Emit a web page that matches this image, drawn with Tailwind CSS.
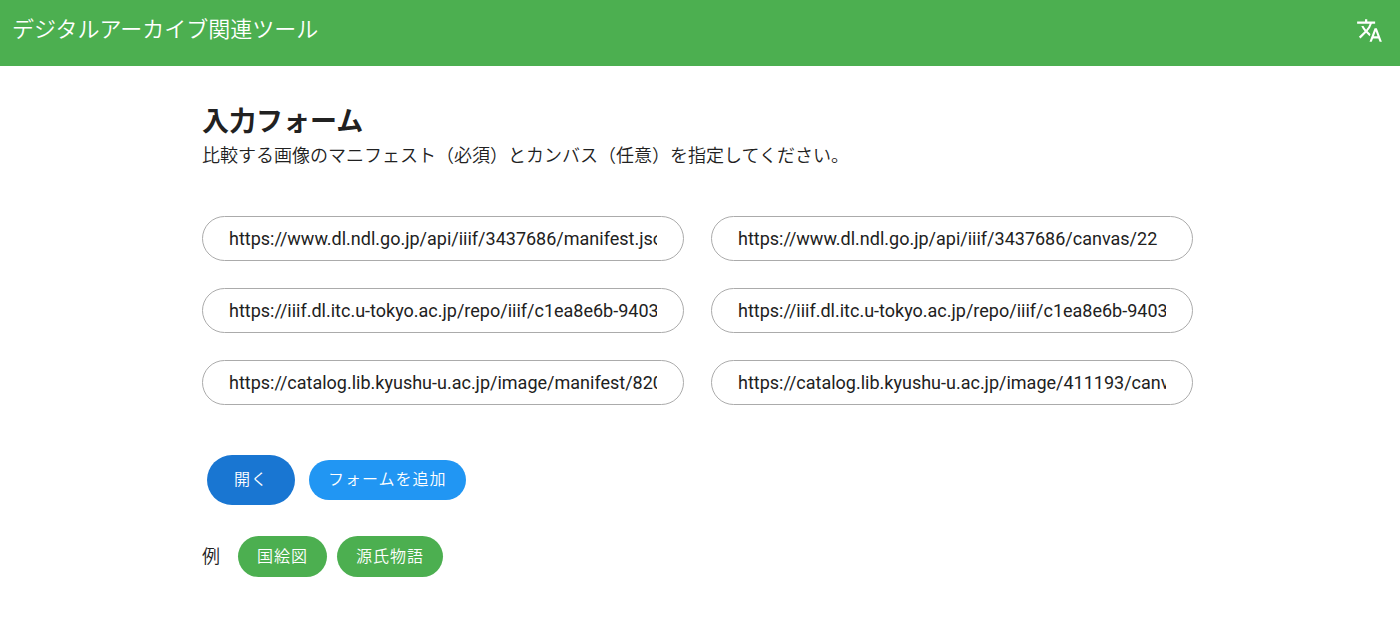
<!DOCTYPE html>
<html lang="ja">
<head>
<meta charset="utf-8">
<meta name="viewport" content="width=device-width, initial-scale=1">
<title>デジタルアーカイブ関連ツール</title>
<script src="https://cdn.jsdelivr.net/npm/@tailwindcss/browser@4"></script>
</head>
<body class="min-h-screen bg-white font-['Roboto','Noto_Sans_CJK_JP',sans-serif] text-[#212121]">
<header class="flex h-[66px] items-start justify-between bg-[#4caf50] pt-3 pr-4 pl-3 text-white">
  <a href="#" class="text-[22px] leading-9 font-[350]">デジタルアーカイブ関連ツール</a>
  <button type="button" aria-label="言語" class="flex h-9 w-[29px] items-center justify-center">
    <svg class="size-[27px]" viewBox="0 0 24 24" fill="currentColor" aria-hidden="true"><path d="M12.87 15.07l-2.54-2.51.03-.03A17.52 17.52 0 0 0 14.07 6H17V4h-7V2H8v2H1v2h11.17C11.5 7.92 10.44 9.75 9 11.35 8.07 10.32 7.3 9.19 6.69 8h-2c.73 1.63 1.73 3.17 2.98 4.56l-5.09 5.02L4 19l5-5 3.11 3.11.76-2.04zM18.5 10h-2L12 22h2l1.12-3h4.75L21 22h2l-4.5-12zm-2.62 7l1.62-4.33L19.12 17h-3.24z"/></svg>
  </button>
</header>
<main class="pr-[5px]">
  <div class="mx-auto max-w-[991px] pt-10">
    <h1 class="text-[27px] leading-8 font-bold">入力フォーム</h1>
    <p class="text-lg leading-9 font-[350]">比較する画像のマニフェスト（必須）とカンバス（任意）を指定してください。</p>
    <form>
      <div class="mt-[42px] grid grid-cols-2 gap-[27px] text-lg">
        <input type="text" aria-label="マニフェスト 1" value="https://www.dl.ndl.go.jp/api/iiif/3437686/manifest.json" class="h-[45px] w-full min-w-0 rounded-full border border-[#ababab] px-[26px]">
        <input type="text" aria-label="カンバス 1" value="https://www.dl.ndl.go.jp/api/iiif/3437686/canvas/22" class="h-[45px] w-full min-w-0 rounded-full border border-[#ababab] px-[26px]">
        <input type="text" aria-label="マニフェスト 2" value="https://iiif.dl.itc.u-tokyo.ac.jp/repo/iiif/c1ea8e6b-9403/manifest" class="h-[45px] w-full min-w-0 rounded-full border border-[#ababab] px-[26px]">
        <input type="text" aria-label="カンバス 2" value="https://iiif.dl.itc.u-tokyo.ac.jp/repo/iiif/c1ea8e6b-9403/canvas" class="h-[45px] w-full min-w-0 rounded-full border border-[#ababab] px-[26px]">
        <input type="text" aria-label="マニフェスト 3" value="https://catalog.lib.kyushu-u.ac.jp/image/manifest/820/manifest.json" class="h-[45px] w-full min-w-0 rounded-full border border-[#ababab] px-[26px]">
        <input type="text" aria-label="カンバス 3" value="https://catalog.lib.kyushu-u.ac.jp/image/411193/canvas/1" class="h-[45px] w-full min-w-0 rounded-full border border-[#ababab] px-[26px]">
      </div>
      <div class="mt-[50px] flex items-center gap-[14px] pl-[5px] font-[350] tracking-[1px] text-white">
        <button type="submit" class="h-[50px] rounded-full bg-[#1976d2] px-[27px]">開く</button>
        <button type="button" class="h-10 rounded-full bg-[#2196f3] px-[19px]">フォームを追加</button>
      </div>
    </form>
    <div class="mt-[31px] flex items-center">
      <span class="mr-[18px] text-lg font-[350]">例</span>
      <div class="flex gap-[10px] font-[350] tracking-[1px] text-white">
        <button type="button" class="h-[41px] rounded-full bg-[#4caf50] px-[19px]">国絵図</button>
        <button type="button" class="h-[41px] rounded-full bg-[#4caf50] px-[19px]">源氏物語</button>
      </div>
    </div>
  </div>
</main>
</body>
</html>
